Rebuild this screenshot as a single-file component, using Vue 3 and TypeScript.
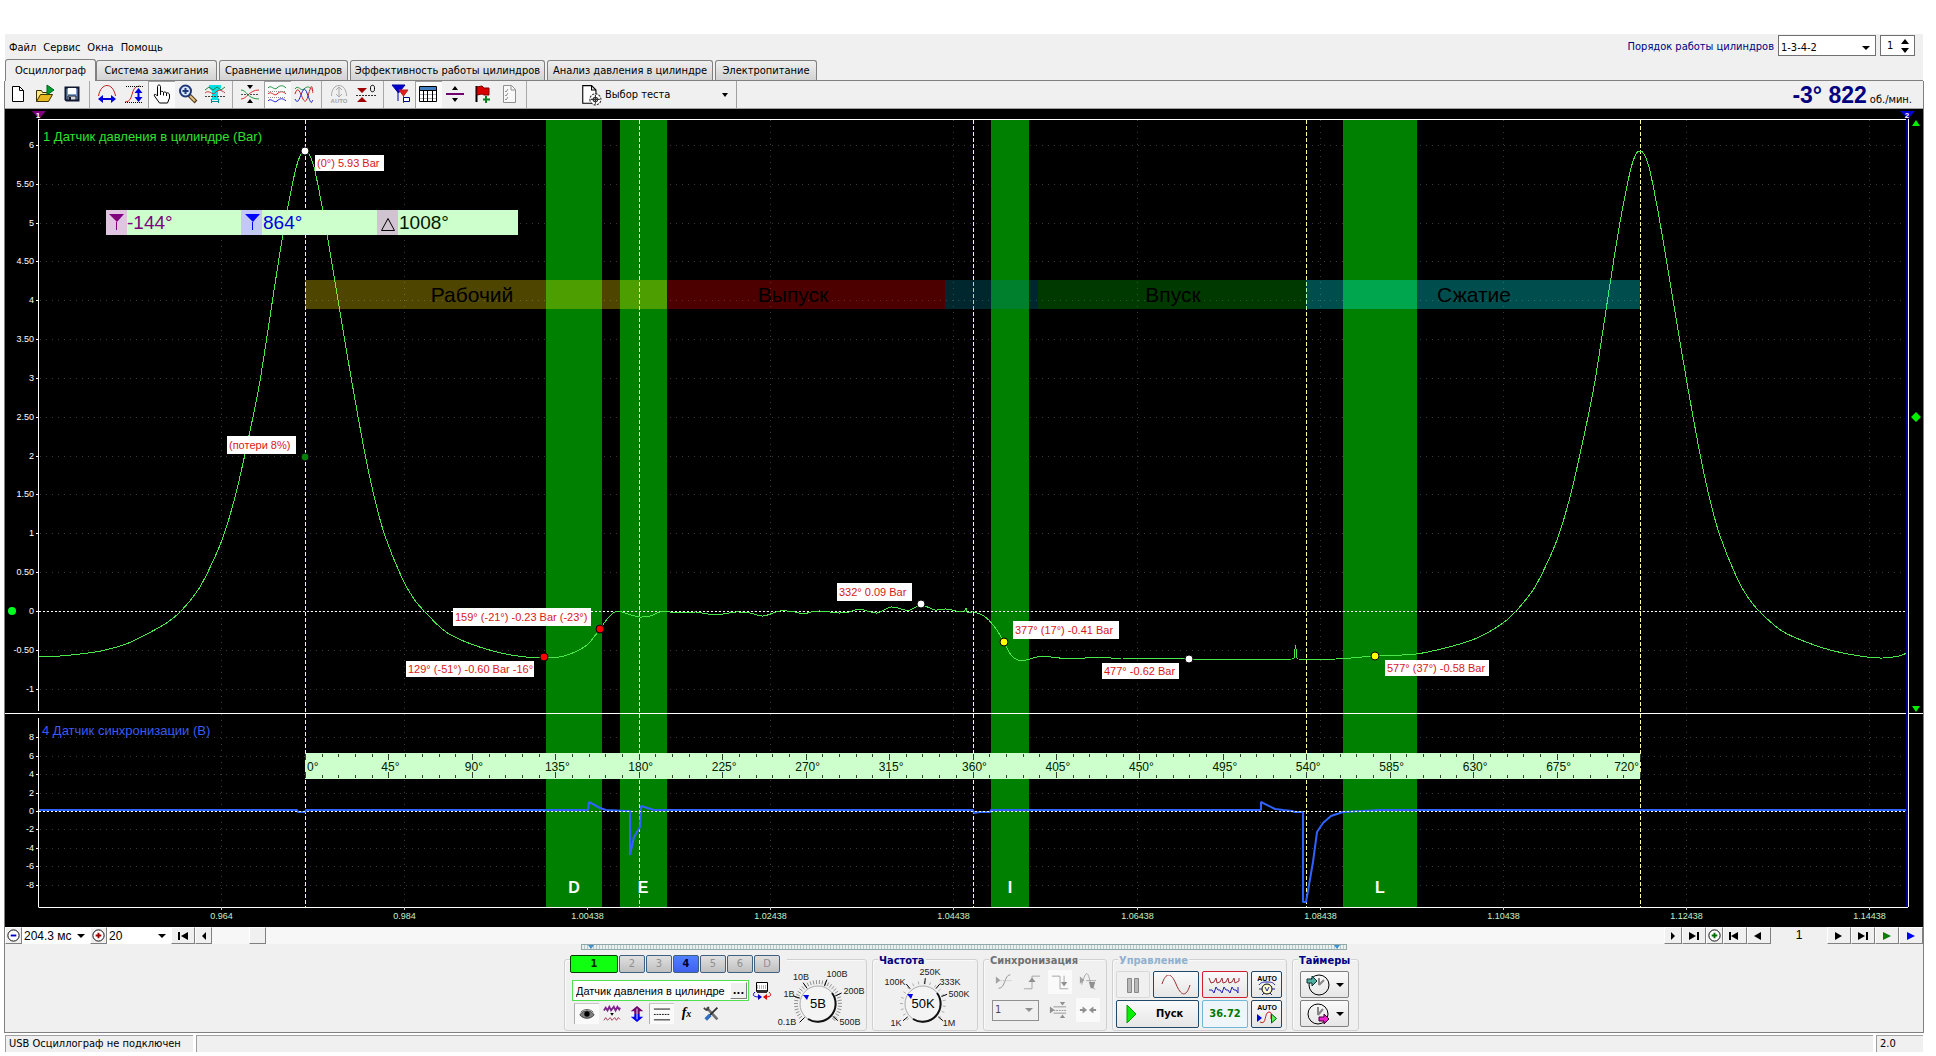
<script setup lang="ts">
import { ref } from 'vue'

type Point = [number, number]
interface Shape { d: string; f?: string; s?: string; w?: number; dash?: string }

const icons: Record<string, Shape[]> = {
  new: [{ d: 'M4.500 2.500h7l4 4v11h-11z', f: '#fff', s: '#000' }, { d: 'M11.500 2.500v4h4', s: '#000' }],
  open: [
    { d: 'M1.500 17.500v-11h5l1 2h6v3', f: '#ffe98a', s: '#3a3000' },
    { d: 'M1.500 17.500l4-7h12l-4 7z', f: '#e8b820', s: '#3a3000' },
    { d: 'M12 1l7 5-7 5z', f: '#00a030', s: '#006020' },
  ],
  save: [
    { d: 'M3.500 3.500h13v13h-12l-1-1z', f: '#7f9fc8', s: '#101830', w: 2 },
    { d: 'M6 4h8v6H6z', f: '#fff' }, { d: 'M6 12h8v4H6z', f: '#d8d8d8', s: '#101830' }, { d: 'M7 13h2v3H7z', f: '#101830' },
  ],
  arc: [{ d: 'M1.500 12C4-2 16-2 18.500 12', s: '#c02020', w: 1 }, { d: 'M1 15l5-4v3h8v-3l5 4-5 4v-3H6v3z', f: '#0000e0' }],
  rise: [
    { d: 'M1 18C11 18 5 2 16 2', s: '#e02020' }, { d: 'M2 2.500h17M1 18.500h17', s: '#000', dash: '1 1' },
    { d: 'M14.500 4l4 5h-3v4h3l-4 5-4-5h3V9h-3z', f: '#0000e0' },
  ],
  hand: [{ d: 'M6.500 12V2.500c0-2 3-2 3 0V8c1-1 2.500-1 3 .5 1-1 2.500-.5 3 .5 1-.5 3 0 3 2v3l-2 5h-8l-5-7c-1-2 1-2.500 3 0zM9.500 8v3M12.500 8.500v3M15.500 9v3', f: '#fff', s: '#000' }],
  zoom: [
    { d: 'M11 11l7 7', s: '#5a4020', w: 4 }, { d: 'M12 12l5 5', s: '#e0c080', w: 2 },
    { d: 'M2 7a5.500 5.500 0 1 0 11 0a5.500 5.500 0 1 0-11 0', f: '#d8e8ff', s: '#203878', w: 2 }, { d: 'M4.500 7h6M7.500 4v6', s: '#203878', w: 2 },
  ],
  cyan: [
    { d: 'M4 1h12v3l-3 3v7l2 2H5l2-2V7L4 4z', f: '#00e0e8' }, { d: 'M0 6l4-3 4 3 4-3 4 3 4-3', s: '#208040' },
    { d: 'M0 9c4-4 8 3 10 0s6-4 10 0', s: '#c04040' }, { d: 'M0 12.500h20', s: '#404040', dash: '2 1' }, { d: 'M6.500 15v4M13.500 15v4M6 17.500h8', s: '#0088a0' },
  ],
  cross: [
    { d: 'M1 6c6 0 6 9 18 9', s: '#20a040' }, { d: 'M1 15c6 0 8-9 18-9', s: '#e03030' }, { d: 'M1 10.500h18', s: '#505050', dash: '2 1' },
    { d: 'M7 1h6l-3 4zM7 19h6l-3-4z', f: '#000' },
  ],
  waves3: [
    { d: 'M1 4c3-4 6 3 9 0s6-3 9 0', s: '#209040', w: 1 }, { d: 'M1 10c3-4 6 3 9 0s6-3 9 0', s: '#e02020', w: 1 }, { d: 'M1 17c3-4 6 3 9 0s6-3 9 0', s: '#2020e0', w: 1 },
    { d: 'M1 7.500h18M1 13.500h18', s: '#909090', dash: '1 1' },
  ],
  waves2: [
    { d: 'M1 5c3-5 6 3 9 0s6-3 9 2', s: '#209040' }, { d: 'M1 10C6-6 9 30 14 12S18 7 19 9', s: '#d02020' }, { d: 'M1 15C6 26 8-5 13 9s4 9 6 7', s: '#2020d0' },
  ],
  auto: [{ d: 'M2.500 12c0-14 15-14 15 0M10 4v9M7 6l3-3 3 3M7 10l3 3 3-3', s: '#a8a8a8' }],
  zero: [{ d: 'M1 4h10l-5 5zM1 18h10l-5-5z', f: '#a00000' }, { d: 'M0 11.500h20', s: '#303030', dash: '2 1' }, { d: 'M14.500 3.500c0-3 4-3 4 0v2c0 3-4 3-4 0z', s: '#000' }],
  filter: [
    { d: 'M1 1h13L7.500 9zM7 7v10', f: '#0000d0', s: '#0000a0' }, { d: 'M8 6h9l-4.500 6zM12.500 11v8', f: '#e02020', s: '#c02020' },
    { d: 'M12.500 13.500h6v4h-6z', f: '#fff', s: '#000080' },
  ],
  table: [
    { d: 'M1.500 2.500h17v15h-17z', f: '#fff', s: '#000' }, { d: 'M2 3h16v3H2z', f: '#4080c0' }, { d: 'M2 10.500h16M2 14.500h16', s: '#b0b0b0' }, { d: 'M1.500 6.500h17M5.500 6v11M9.500 6v11M14.500 6v11', s: '#000' },
  ],
  split: [{ d: 'M1 9h18v2H1z', f: '#700070' }, { d: 'M7 6l3-4 3 4zM7 14l3 4 3-4z', f: '#000' }],
  flag: [{ d: 'M4.500 2v16', s: '#000', w: 2 }, { d: 'M5 3l5-1 2 2h5v7h-5l-2-1-5 1z', f: '#d80000', s: '#800000' }, { d: 'M14 12v7M11 15.500h7', s: '#008020', w: 2 }],
  list: [{ d: 'M4.500 1.500h8l4 4v13h-12z', f: '#f8f8f8', s: '#909090' }, { d: 'M12 2v4h4M6 7l1 1 2-3M6 11l1 1 2-3M6 15l1 1 2-3', s: '#909090' }],
  test: [
    { d: 'M2.500 1.500h8l4 4v12h-12z', f: '#fff', s: '#000' }, { d: 'M10.500 1.500v4h4', s: '#000' },
    { d: 'M9 14a5 5 0 1 0 10 0a5 5 0 1 0-10 0', f: '#fff', s: '#303030', w: 2, dash: '2 1' }, { d: 'M12 14a2 2 0 1 0 4 0a2 2 0 1 0-4 0M14 10v8M10 14h8', s: '#303030' },
  ],
  eye: [{ d: 'M2 11c4-6 12-6 16 0-4 5-12 5-16 0z', f: '#808080', s: '#404040' }, { d: 'M7 10a3 3 0 1 0 6 0a3 3 0 1 0-6 0', f: '#000' }, { d: 'M3 8c4-4 10-4 14 0', s: '#505050' }],
  twowave: [{ d: 'M1 6l2-3 2 3 2-4 2 4 3-4 2 4 2-4 2 3 1-2', s: '#802090', w: 2 }, { d: 'M8 9h4l-2 3z', f: '#000' }, { d: 'M1 17l2-3 2 3 3-3 2 3 3-3 2 3 2-3 2 2', s: '#a03050' }],
  updown: [{ d: 'M10 1l7 6h-4v3H7V7H3z', f: '#700070' }, { d: 'M10 19l7-6h-4v-3H7v3H3z', f: '#0000f0' }, { d: 'M10 4v12', s: '#fff' }],
  lines: [{ d: 'M1 4.500h18M1 16.500h18', s: '#000' }, { d: 'M1 10.500h18', s: '#000', dash: '2 1' }],
  tools: [{ d: 'M4 3l12 13', s: '#707070', w: 3 }, { d: 'M16 3L6 13', s: '#303030', w: 2 }, { d: 'M8 11l-5 5', s: '#3070c0', w: 4 }, { d: 'M1 3c3 4 5 3 5-1', s: '#404040', w: 2 }],
  copy: [
    { d: 'M4.500 1.500h11v9h-11z', f: '#fff', s: '#000' }, { d: 'M5 5h10M5 7h10', s: '#707070', dash: '1 1' }, { d: 'M5 9h10v3H5z', f: '#303030' },
    { d: 'M3 11c-4 4 0 5 5 5', s: '#0000c0' }, { d: 'M6 13l4 3-4 3z', f: '#0000c0' }, { d: 'M17 11c4 4 0 5-4 5', s: '#e00000' }, { d: 'M15 13l-4 3 4 3z', f: '#e00000' },
  ],
  s1: [{ d: 'M1 4l5 4-5 4z', f: '#a0a0a0' }, { d: 'M4 17c8 0 6-15 13-15', s: '#909090' }, { d: 'M1 8.500h18', s: '#b0b0b0', dash: '1 1' }],
  s2: [{ d: 'M1 17.500h9v-14h9', s: '#a0a0a0' }, { d: 'M6 10l4-5 4 5z', f: '#909090' }],
  s3: [{ d: 'M1 3.500h9v14h9', s: '#a0a0a0' }, { d: 'M14.500 3v10', s: '#a0a0a0' }, { d: 'M11 10h7l-3.500 5z', f: '#909090' }],
  s4: [{ d: 'M1 4l5 4-5 4z', f: '#a0a0a0' }, { d: 'M3 13C8-5 10 0 12 8s2 8 6 10M8 8.500h11', s: '#a0a0a0' }, { d: 'M11 10h7l-2 7h-3z', f: '#909090' }],
  s5: [{ d: 'M1 6l5 4-5 4zM12 1h6l-3 4zM12 19h6l-3-4z', f: '#909090' }, { d: 'M5 6.500h14M5 13.500h14', s: '#909090' }, { d: 'M5 10.500h14', s: '#909090', dash: '2 1' }],
  s6: [{ d: 'M1 9h3V6l5 4-5 4v-3H1zM19 9h-3V6l-5 4 5 4v-3h3z', f: '#909090' }],
}

const toolGroups = [
  [{ i: 'new', t: 'Новый' }, { i: 'open', t: 'Открыть' }, { i: 'save', t: 'Сохранить' }],
  [{ i: 'arc', t: 'Масштаб X' }, { i: 'rise', t: 'Масштаб Y' }, { i: 'hand', t: 'Рука', on: true }, { i: 'zoom', t: 'Лупа' }, { i: 'cyan', t: 'Обзор' }],
  [{ i: 'cross', t: 'Совместить' }, { i: 'waves3', t: 'Раздельно', on: true }, { i: 'waves2', t: 'Вместе' }],
  [{ i: 'auto', t: 'Авто' }, { i: 'zero', t: 'Ноль' }],
  [{ i: 'filter', t: 'Маркеры' }, { i: 'table', t: 'Таблица', on: true }, { i: 'split', t: 'Разделить' }, { i: 'flag', t: 'Метка' }, { i: 'list', t: 'Отчёт' }],
]

const menu = ['Файл', 'Сервис', 'Окна', 'Помощь']
const tabs = [
  { name: 'Осциллограф', w: 91 }, { name: 'Система зажигания', w: 121 }, { name: 'Сравнение цилиндров', w: 129 },
  { name: 'Эффективность работы цилиндров', w: 195 }, { name: 'Анализ давления в цилиндре', w: 166 }, { name: 'Электропитание', w: 102 },
]
const activeTab = ref(0)
const order = ref('1-3-4-2')
const cylinder = ref(1)
const span = ref('204.3 мс')
const perDiv = ref('20')
const channelName = ref('Датчик давления в цилиндре')
const channels = ['1', '2', '3', '4', '5', '6', 'D']

/* chart geometry */
const DEG = 1335 / 720
const degX = (d: number) => 305 + d * DEG
const barY = (v: number) => 611 - v * 77.7
const syncY = (v: number) => 811 - v * 9.2
const pressureTicks = Array.from({ length: 15 }, (_, i) => 6 - i * 0.5)
const syncTicks = [8, 6, 4, 2, 0, -2, -4, -6, -8]
const fmt = (v: number) => (Number.isInteger(v) ? String(v) : v.toFixed(2))
const timeTicks = ['0.964', '0.984', '1.00438', '1.02438', '1.04438', '1.06438', '1.08438', '1.10438', '1.12438', '1.14438']
const timeX = (i: number) => Math.round(221 + i * 183.1) + 0.5
const bands = [{ n: 'D', x: 546, w: 56, t: 574 }, { n: 'E', x: 620, w: 47, t: 643 }, { n: 'I', x: 991, w: 38, t: 1010 }, { n: 'L', x: 1343, w: 74, t: 1380 }]
const phases = [
  { x: 305, w: 362, c: 'rgba(255,230,0,.3)' }, { x: 667, w: 278, c: 'rgba(255,0,0,.3)' },
  { x: 945, w: 93, c: 'rgba(0,130,150,.3)' }, { x: 1038, w: 268, c: 'rgba(0,190,0,.3)' }, { x: 1306, w: 334, c: 'rgba(0,255,255,.3)' },
]
const phaseNames = [{ n: 'Рабочий', x: 472 }, { n: 'Выпуск', x: 793 }, { n: 'Впуск', x: 1173 }, { n: 'Сжатие', x: 1474 }]
const ruler = Array.from({ length: 81 }, (_, i) => i * 9)
const rulerLabels = Array.from({ length: 17 }, (_, i) => i * 45)

const rise: Point[] = [[182, 610], [198, 590], [208, 571.7], [222, 540], [234.5, 499], [245, 454], [258, 392], [266, 343], [273, 297], [281, 246], [288, 206], [296, 168], [301, 154], [305, 151], [309, 154], [314, 167], [322, 206], [329, 246], [337.5, 297], [346, 348], [357, 411], [366, 459], [375, 500], [385, 536], [402, 578], [414, 599]]
const pressure: Point[] = [
  [39, 657], [60, 656], [80, 654], [101, 651], [126, 644], [147, 634], [168, 622], ...rise,
  [426, 613], [446, 632], [471, 644], [501, 653], [526, 657], [547, 658], [564, 656], [581, 649], [589, 643], [600, 629], [608, 618],
  [615, 612], [622, 612], [631, 615], [640, 617], [650, 616], [660, 612], [670, 612], [683, 613], [696, 612], [708, 614], [723, 614], [736, 612],
  [750, 613], [763, 616], [780, 611], [795, 612], [803, 614], [811, 612], [820, 611], [839, 613], [849, 612], [859, 609], [877, 613], [891, 607],
  [905, 610], [910, 610], [921, 605], [935, 610], [946, 609], [964, 612], [966, 608], [967, 612], [974, 612], [984, 616], [994, 626], [1004, 642],
  [1011, 655], [1018, 660], [1026, 660], [1037, 657], [1051, 657], [1070, 659], [1100, 657], [1121, 659], [1150, 658], [1188, 659], [1240, 659],
  [1292, 659], [1294, 658], [1295.5, 645], [1297, 658], [1298, 659], [1336, 659], [1375, 656], [1416, 654], [1449, 647], [1477, 638], [1503, 623],
  ...rise.map(([x, y]): Point => [x + 1335, y]),
  [1761, 613], [1782, 631], [1806, 642], [1834, 651], [1867, 657], [1883, 658], [1899, 656], [1907, 653],
]
const sync: Point[] = [
  [39, 810], [297, 810], [298, 812], [305, 812], [306, 810], [588, 810], [589, 802], [600, 808], [606, 810], [627, 811], [630, 811], [630, 855], [634, 837], [640, 827],
  [641, 806], [654, 810], [666, 810], [973, 810], [974, 813], [980, 812], [990, 812], [991, 810], [1261, 810], [1261, 802], [1275, 809], [1283, 810], [1292, 811],
  [1295, 812], [1303, 812], [1303, 902], [1306, 902], [1309, 885], [1313, 862], [1317, 832], [1323, 823], [1331, 816], [1343, 812], [1362, 811], [1380, 810], [1907, 810],
]
const line = (p: Point[]) => p.map(([x, y], i) => `${i ? 'L' : 'M'}${x} ${y}`).join('')
/* smooth curve: tangents follow the neighbouring samples, handles scale with segment length; narrow spikes stay straight */
const spline = (p: Point[]) => {
  const tangent = (i: number): Point => {
    const a = p[Math.max(i - 1, 0)], c = p[Math.min(i + 1, p.length - 1)]
    const len = Math.hypot(c[0] - a[0], c[1] - a[1])
    return [(c[0] - a[0]) / len, (c[1] - a[1]) / len]
  }
  let d = `M${p[0][0]} ${p[0][1]}`
  for (let i = 0; i < p.length - 1; i++) {
    const b = p[i], c = p[i + 1], t = tangent(i), u = tangent(i + 1)
    if (c[0] - b[0] < 3) {
      d += `L${c[0]} ${c[1]}`
      continue
    }
    const k = Math.hypot(c[0] - b[0], c[1] - b[1]) / 3
    d += `C${(b[0] + k * t[0]).toFixed(2)} ${(b[1] + k * t[1]).toFixed(2)} ${(c[0] - k * u[0]).toFixed(2)} ${(c[1] - k * u[1]).toFixed(2)} ${c[0]} ${c[1]}`
  }
  return d
}
const notes = [
  { t: '(0°) 5.93 Bar', x: 315, y: 155, w: 69, h: 16 }, { t: '(потери 8%)', x: 227, y: 436, w: 69, h: 18 },
  { t: '159° (-21°) -0.23 Bar (-23°)', x: 453, y: 608, w: 138, h: 18 }, { t: '129° (-51°) -0.60 Bar -16°', x: 406, y: 661, w: 128, h: 16 },
  { t: '332° 0.09 Bar', x: 837, y: 583, w: 75, h: 18 }, { t: '377° (17°) -0.41 Bar', x: 1013, y: 621, w: 106, h: 18 },
  { t: '477° -0.62 Bar', x: 1102, y: 663, w: 77, h: 16 }, { t: '577° (37°) -0.58 Bar', x: 1385, y: 660, w: 104, h: 16 },
]
const dots = [
  { x: 305, y: 151, c: '#fff' }, { x: 305, y: 457, c: '#008000' }, { x: 544, y: 657, c: '#f00' }, { x: 600, y: 629, c: '#f00' },
  { x: 921, y: 604, c: '#fff' }, { x: 1004, y: 642, c: '#ff0' }, { x: 1189, y: 659, c: '#fff' }, { x: 1375, y: 656, c: '#ff0' },
]

interface Dial { value: string; px: number; py: number; cx: number; labels: { t: string; x: number; y: number }[]; marks: number[] }
const voltDial: Dial = {
  value: '5В', px: 21, py: 31, cx: 33,
  labels: [{ t: '10В', x: 16, y: 14 }, { t: '100В', x: 52, y: 11 }, { t: '200В', x: 69, y: 28 }, { t: '500В', x: 65, y: 59 }, { t: '0.1В', x: 2, y: 59 }, { t: '1В', x: 4, y: 31 }],
  marks: [-135, -72, -35, 20, 65, 130],
}
const freqDial: Dial = {
  value: '50K', px: 28, py: 30, cx: 41,
  labels: [{ t: '250K', x: 48, y: 9 }, { t: '333K', x: 68, y: 19 }, { t: '500K', x: 77, y: 31 }, { t: '1M', x: 67, y: 60 }, { t: '1K', x: 14, y: 60 }, { t: '100K', x: 13, y: 19 }],
  marks: [-130, -40, 5, 40, 68, 130],
}
const minorMarks = Array.from({ length: 36 }, (_, i) => -135 + i * 7.7)
const spoke = (cx: number, deg: number, r1: number, r2: number) => {
  const a = (deg * Math.PI) / 180
  return `M${(cx + r1 * Math.sin(a)).toFixed(1)} ${(38 - r1 * Math.cos(a)).toFixed(1)}L${(cx + r2 * Math.sin(a)).toFixed(1)} ${(38 - r2 * Math.cos(a)).toFixed(1)}`
}
const navLeft = [{ d: 'M3 1h2v8H3zM13 1v8L6 5z', w: 24 }, { d: 'M10 1v8L6 5z', w: 17 }]
</script>

<template>
  <div class="app">
    <header class="top">
      <nav class="menu"><button v-for="m in menu" :key="m" type="button">{{ m }}</button></nav>
      <div class="order">
        <label for="order">Порядок работы цилиндров</label>
        <span class="combo boxed order-box">
          <select id="order" v-model="order"><option>1-3-4-2</option><option>1-2-4-3</option></select>
          <svg class="arrow" viewBox="0 0 8 4"><path d="M0 0h8L4 4z" /></svg>
        </span>
        <span class="spin">
          <input v-model="cylinder" type="number" aria-label="Номер цилиндра">
          <svg viewBox="0 0 8 14"><path d="M0 5h8L4 0zM0 9h8l-4 5z" /></svg>
        </span>
      </div>
    </header>

    <div class="tabs" role="tablist">
      <button v-for="(t, i) in tabs" :key="t.name" type="button" role="tab" :aria-selected="i === activeTab" :class="{ active: i === activeTab }" :style="{ width: t.w + 'px' }" @click="activeTab = i">{{ t.name }}</button>
    </div>

    <main class="page">
      <div class="toolbar">
        <div v-for="(g, gi) in toolGroups" :key="gi" class="tool-group">
          <button v-for="b in g" :key="b.i" type="button" :title="b.t" :class="{ on: 'on' in b }">
            <svg viewBox="0 0 20 20">
              <path v-for="(p, pi) in icons[b.i]" :key="pi" :d="p.d" :fill="p.f ?? 'none'" :stroke="p.s" :stroke-width="p.w ?? 1" :stroke-dasharray="p.dash" />
              <text v-if="b.i === 'auto'" x="10" y="19" class="auto-text">AUTO</text>
            </svg>
          </button>
        </div>
        <button type="button" class="test">
          <svg viewBox="0 0 20 20"><path v-for="(p, pi) in icons.test" :key="pi" :d="p.d" :fill="p.f ?? 'none'" :stroke="p.s" :stroke-dasharray="p.dash" /></svg>
          <span>Выбор теста</span>
          <svg class="arrow" viewBox="0 0 8 4"><path d="M1 0h6L4 4z" /></svg>
        </button>
        <div class="rpm"><b>-3° 822</b><span>об./мин.</span></div>
      </div>

      <svg class="chart" viewBox="5 109 1918 818">
        <rect x="5" y="109" width="1918" height="818" fill="#000" />
        <g class="grid">
          <path v-for="v in pressureTicks" :key="'p' + v" :d="`M40 ${Math.round(barY(v)) + 0.5}H1906`" />
          <path v-for="v in syncTicks" :key="'s' + v" :d="`M40 ${Math.round(syncY(v)) + 0.5}H1906`" />
          <path v-for="(t, i) in timeTicks" :key="t" :d="`M${timeX(i)} 120V906`" />
        </g>
        <g v-for="b in bands" :key="b.n">
          <rect :x="b.x" y="120" :width="b.w" height="787" fill="#008000" />
          <text :x="b.t" y="893" class="band-name">{{ b.n }}</text>
        </g>
        <path class="cursor" d="M305.500 120V907M639.500 120V907M973.500 120V907M1306.500 120V907M1640.500 120V907" />
        <path class="zero" d="M39 611.500H1907" />
        <path :d="spline(pressure)" class="curve" />
        <path :d="line(sync)" class="pulse" />
        <path class="zero" d="M39 811.500H1907" />
        <rect v-for="p in phases" :key="p.x" :x="p.x" y="280" :width="p.w" height="29" :fill="p.c" />
        <text v-for="p in phaseNames" :key="p.n" :x="p.x" y="302" class="phase">{{ p.n }}</text>
        <path d="M39 119.500H1908" stroke="#fff" /><path d="M5 713.500H1923M38.500 907.500H1908" stroke="#fff" />
        <path d="M38.500 119V711M38.500 718V907" stroke="#fff" /><path d="M1908.500 119V907" stroke="#fff" /><path d="M1907 119V907" stroke="#000090" stroke-width="2" />

        <g class="scale">
          <g v-for="v in pressureTicks" :key="'a' + v"><text x="34" :y="barY(v) + 3">{{ fmt(v) }}</text><path :d="`M36 ${Math.round(barY(v)) + 0.5}h3`" stroke="#fff" /></g>
          <g v-for="v in syncTicks" :key="'b' + v"><text x="34" :y="syncY(v) + 3">{{ v }}</text><path :d="`M36 ${Math.round(syncY(v)) + 0.5}h3`" stroke="#fff" /></g>
        </g>
        <g class="time"><g v-for="(t, i) in timeTicks" :key="t"><path :d="`M${timeX(i)} 907v3`" stroke="#ccc" /><text :x="timeX(i)" y="919">{{ t }}</text></g></g>
        <text x="43" y="141" class="title" fill="#30e030">1 Датчик давления в цилиндре (Bar)</text>
        <text x="42" y="735" class="title" fill="#3a5cf0">4 Датчик синхронизации (В)</text>

        <path d="M32 111h14l-7 8z" fill="#800080" /><path d="M1900 111h15l-7 8z" fill="#0000d0" />
        <text x="38" y="118" class="mark">1</text><text x="1907" y="118" class="mark">2</text>
        <path d="M1912 126l4-6 4 6zM1912 706h8l-4 6zM1916 412l5 5-5 5-5-5z" fill="#00f000" />
        <circle cx="12" cy="611" r="4" fill="#00ff20" />

        <rect x="305" y="753" width="1335" height="26" fill="#ccffcc" />
        <path v-for="d in ruler" :key="d" :d="`M${Math.round(degX(d)) + 0.5} 754v${d % 45 ? 3 : 6}m0 ${d % 45 ? 18 : 12}v${d % 45 ? 3 : 6}`" stroke="#304030" />
        <text v-for="d in rulerLabels" :key="d" :x="d === 0 ? 307 : d === 720 ? 1639 : degX(d) + 2" y="771" class="ruler-text" :text-anchor="d === 0 ? 'start' : d === 720 ? 'end' : 'middle'">{{ d }}°</text>

        <rect x="106" y="210" width="412" height="25" fill="#ccffcc" />
        <rect x="106" y="210" width="21" height="25" fill="#e0c4e0" /><rect x="241" y="210" width="21" height="25" fill="#c4c8f4" /><rect x="377" y="210" width="21" height="25" fill="#cfc4cf" />
        <path d="M109 214h15l-7 8zM116 222h1v8h-1z" fill="#800080" /><path d="M245 214h15l-7 8zM252 222h1v8h-1z" fill="#0000ff" />
        <path d="M381.500 230.500h13l-6.500-12z" fill="none" stroke="#000" />
        <g class="readout"><text x="127" y="229" fill="#800080">-144°</text><text x="263" y="229" fill="#0000e0">864°</text><text x="399" y="229" fill="#001800">1008°</text></g>

        <circle v-for="p in dots" :key="p.x + '-' + p.y" :cx="p.x" :cy="p.y" r="4" :fill="p.c" stroke="#000" stroke-width="1" />
        <g v-for="n in notes" :key="n.t"><rect :x="n.x" :y="n.y" :width="n.w" :height="n.h" fill="#fff" /><text :x="n.x + 2" :y="n.y + n.h / 2 + 4" class="note">{{ n.t }}</text></g>
      </svg>

      <div class="scroll">
        <button type="button" aria-label="Уменьшить" class="w17"><svg viewBox="0 0 16 16" class="round"><circle cx="8" cy="8" r="6" /><path d="M5 8h6" stroke="#0000c0" stroke-width="2" /></svg></button>
        <span class="combo span-box"><select v-model="span" aria-label="Развёртка"><option>204.3 мс</option></select><svg class="arrow" viewBox="0 0 8 4"><path d="M0 0h8L4 4z" /></svg></span>
        <button type="button" aria-label="Увеличить" class="w17"><svg viewBox="0 0 16 16" class="round"><circle cx="8" cy="8" r="6" /><path d="M5 8h6M8 5v6" stroke="#a00000" stroke-width="2" /></svg></button>
        <span class="combo div-box"><select v-model="perDiv" aria-label="Деление"><option>20</option></select><svg class="arrow" viewBox="0 0 8 4"><path d="M0 0h8L4 4z" /></svg></span>
        <button v-for="n in navLeft" :key="n.d" type="button" aria-label="Назад" :style="{ width: n.w + 'px' }"><svg viewBox="0 0 16 10"><path :d="n.d" /></svg></button>
        <div class="track"><span class="thumb"></span></div>
        <button type="button" aria-label="Вперёд" class="w18"><svg viewBox="0 0 16 10"><path d="M6 1v8l4-4z" /></svg></button>
        <button type="button" aria-label="В конец" class="w24"><svg viewBox="0 0 16 10"><path d="M3 1v8l7-4zM11 1h2v8h-2z" /></svg></button>
        <button type="button" aria-label="Добавить" class="w17"><svg viewBox="0 0 16 16" class="round"><circle cx="8" cy="8" r="6" /><path d="M5 8h6M8 5v6" stroke="#007000" stroke-width="2" /></svg></button>
        <button type="button" aria-label="Первый" class="w24"><svg viewBox="0 0 16 10"><path d="M2 1h2v8H2zM11 1v8L4 5z" /></svg></button>
        <button type="button" aria-label="Предыдущий" class="w24"><svg viewBox="0 0 16 10"><path d="M10 1v8L3 5z" /></svg></button>
        <span class="frame-no">1</span>
        <button type="button" aria-label="Следующий" class="w24"><svg viewBox="0 0 16 10"><path d="M4 1v8l7-4z" /></svg></button>
        <button type="button" aria-label="Последний" class="w24"><svg viewBox="0 0 16 10"><path d="M3 1v8l7-4zM11 1h2v8h-2z" /></svg></button>
        <button type="button" aria-label="Воспроизвести" class="w24"><svg viewBox="0 0 16 10"><path d="M4 1v8l8-4z" fill="#008000" /></svg></button>
        <button type="button" aria-label="Воспроизвести всё" class="w24"><svg viewBox="0 0 16 10"><path d="M4 1v8l8-4z" fill="#0000f0" /></svg></button>
      </div>

      <div class="splitter"><i></i><i></i></div>
      <section class="panel">
        <div class="group channel">
          <div class="channel-left">
            <div class="channels"><button v-for="c in channels" :key="c" type="button" :class="{ green: c === '1', blue: c === '4' }">{{ c }}</button></div>
            <div class="name-row">
              <span class="name-box"><input v-model="channelName" aria-label="Имя канала"><button type="button">...</button></span>
              <svg viewBox="0 0 20 20"><path v-for="(p, pi) in icons.copy" :key="pi" :d="p.d" :fill="p.f ?? 'none'" :stroke="p.s" :stroke-dasharray="p.dash" /></svg>
            </div>
            <div class="modes">
              <button v-for="n in ['eye', 'twowave', 'updown', 'lines', 'fx', 'tools']" :key="n" type="button" :aria-label="n" :class="{ on: n === 'eye' || n === 'lines' }">
                <i v-if="n === 'fx'" class="fx">f<small>x</small></i>
                <svg v-else viewBox="0 0 20 20"><path v-for="(p, pi) in icons[n]" :key="pi" :d="p.d" :fill="p.f ?? 'none'" :stroke="p.s" :stroke-width="p.w ?? 1" :stroke-dasharray="p.dash" /></svg>
              </button>
            </div>
          </div>
          <svg v-for="k in [voltDial]" :key="k.value" class="dial volt" viewBox="-12 0 98 64">
            <path v-for="m in minorMarks" :key="m" :d="spoke(k.cx, m, 20, 24)" stroke="#909090" /><path v-for="m in k.marks" :key="m" :d="spoke(k.cx, m, 19, 26)" stroke="#000" />
            <circle :cx="k.cx" cy="38" r="18" fill="#f4f4f4" stroke="#aaa" /><path :d="`M${k.cx + 14} 27A18 18 0 0 1 ${k.cx - 10} 53`" fill="none" stroke="#111" stroke-width="2" />
            <path :d="`M${k.px - 3} ${k.py - 2}h6l-2 5z`" fill="#0000f0" /><text :x="k.cx" y="42" class="dial-value">{{ k.value }}</text>
            <text v-for="l in k.labels" :key="l.t" :x="l.x" :y="l.y" class="dial-label">{{ l.t }}</text>
          </svg>
        </div>

        <div class="group freq">
          <h3>Частота</h3>
          <svg v-for="k in [freqDial]" :key="k.value" class="dial" viewBox="0 0 100 64">
            <path v-for="m in minorMarks.filter((_, i) => i % 2 === 0)" :key="m" :d="spoke(k.cx, m, 20, 23)" stroke="#b0b0b0" /><path v-for="m in k.marks" :key="m" :d="spoke(k.cx, m, 20, 26)" stroke="#000" />
            <circle :cx="k.cx" cy="38" r="18" fill="#f4f4f4" stroke="#aaa" /><path :d="`M${k.cx + 14} 27A18 18 0 0 1 ${k.cx - 10} 53`" fill="none" stroke="#111" stroke-width="2" />
            <path :d="`M${k.px - 3} ${k.py - 2}h6l-2 5z`" fill="#0000f0" /><text :x="k.cx" y="42" class="dial-value">{{ k.value }}</text>
            <text v-for="l in k.labels" :key="l.t" :x="l.x" :y="l.y" class="dial-label">{{ l.t }}</text>
          </svg>
        </div>

        <div class="group sync">
          <h3>Синхронизация</h3>
          <div class="sync-row">
            <button v-for="n in ['s1', 's2', 's3', 's4']" :key="n" type="button" disabled :aria-label="n" :class="{ on: n === 's3' }"><svg viewBox="0 0 20 20"><path v-for="(p, pi) in icons[n]" :key="pi" :d="p.d" :fill="p.f ?? 'none'" :stroke="p.s" :stroke-dasharray="p.dash" /></svg></button>
          </div>
          <div class="sync-row">
            <span class="combo sync-box"><select disabled aria-label="Канал синхронизации"><option>1</option></select><svg class="arrow" viewBox="0 0 8 4"><path d="M0 0h8L4 4z" fill="#909090" /></svg></span>
            <button v-for="n in ['s5', 's6']" :key="n" type="button" disabled :aria-label="n" :class="{ on: n === 's6' }"><svg viewBox="0 0 20 20"><path v-for="(p, pi) in icons[n]" :key="pi" :d="p.d" :fill="p.f ?? 'none'" :stroke="p.s" :stroke-dasharray="p.dash" /></svg></button>
          </div>
        </div>

        <div class="group control">
          <h3>Управление</h3>
          <div class="control-grid">
            <button type="button" class="flat" aria-label="Пауза"><svg viewBox="0 0 20 20"><path d="M4.500 3.500h4v14h-4zM11.500 3.500h4v14h-4z" fill="#b8b8b8" stroke="#888" /></svg></button>
            <button type="button" aria-label="Синус"><svg class="wide" viewBox="0 0 30 20"><path d="M1 9C5-3 10-3 15 9s10 14 14 1" fill="none" stroke="#a03030" /></svg></button>
            <button type="button" class="red" aria-label="Запись"><svg class="wider" viewBox="0 0 34 20"><path d="M1 3l2 5 3-1 2-4 1 5 3-1 2-4 1 5 3-1 2-4 1 5 3-1 2-4 1 5 4-2V3" fill="none" stroke="#a03030" /><path d="M1 15h3l2 3 2-6 2 3h2l2 3 2-6 2 3h2l2 3 2-6 2 3h2l2 3v-6" fill="none" stroke="#2020b0" /></svg></button>
            <button type="button" aria-label="Авто масштаб"><svg class="tall" viewBox="0 0 24 24"><text x="12" y="8" class="auto-mini">AUTO</text><circle cx="12" cy="16" r="5" fill="#ffffd0" stroke="#000" /><path d="M10 14l2 4 2-4" fill="none" stroke="#2020a0" /><path d="M4 12c2-3 5-3 8-3s6 0 8 3M7 22l2-2M17 22l-2-2M4 16h3M17 16h3" fill="none" stroke="#2020a0" /></svg></button>
            <button type="button" class="start"><svg viewBox="0 0 20 20"><path d="M6 1v18L15 10z" fill="#00f000" stroke="#00a000" /></svg><span>Пуск</span></button>
            <button type="button" class="value">36.72</button>
            <button type="button" aria-label="Авто пуск"><svg class="tall" viewBox="0 0 24 24"><text x="12" y="8" class="auto-mini">AUTO</text><path d="M2 12l5 4-5 4z" fill="#0000e0" /><path d="M5 20c7 4 4-10 9-10s-1 8 4 8" fill="none" stroke="#c02020" /><path d="M16.500 12v9l5-4.500z" fill="#60f060" stroke="#006000" /></svg></button>
          </div>
        </div>

        <div class="group timers">
          <h3>Таймеры</h3>
          <button type="button" aria-label="Таймер включения"><svg class="clock" viewBox="0 0 24 24"><circle cx="13" cy="12" r="10" fill="none" stroke="#000" /><path d="M13 12V5M13 12l5-5" stroke="#888" stroke-width="2" /><path d="M1 6h5V3l5 5-5 5v-3H1z" fill="#50b0a0" stroke="#103030" /></svg><svg class="arrow" viewBox="0 0 8 4"><path d="M0 0h8L4 4z" /></svg></button>
          <button type="button" aria-label="Таймер выключения"><svg class="clock" viewBox="0 0 24 24"><circle cx="12" cy="12" r="10" fill="none" stroke="#000" /><path d="M12 13V5M12 13l5-6" stroke="#888" stroke-width="2" /><path d="M13 15h5v-3l5 5-5 5v-3h-5z" fill="#f020d0" stroke="#400030" /></svg><svg class="arrow" viewBox="0 0 8 4"><path d="M0 0h8L4 4z" /></svg></button>
        </div>
      </section>
    </main>

    <footer class="status"><span class="s-left">USB Осциллограф не подключен</span><span class="s-mid"></span><span class="s-right">2.0</span></footer>
  </div>
</template>

<style>
body { margin: 0; background: #fff; }
</style>

<style scoped>
* { box-sizing: border-box; }
.app { margin: 34px 13px 0 5px; background: #f0f0f0; font: 11px/16px "DejaVu Sans Condensed", "Liberation Sans", sans-serif; color: #000; }
button, select, input { font: inherit; color: inherit; margin: 0; padding: 0; border: 0; border-radius: 0; background: none; }
svg { display: block; flex: none; }
.top { display: flex; justify-content: space-between; height: 25px; }
.menu { display: flex; gap: 7px; padding: 3px 0 0 4px; align-items: center; }
.order { display: flex; gap: 4px; padding: 1px 8px 0 0; color: #000080; align-items: flex-start; line-height: 24px; }
.combo { display: grid; align-items: center; background: #fff; color: #000; }
.combo > * { grid-area: 1 / 1; }
.combo select { appearance: none; width: 100%; height: 100%; padding-left: 2px; }
.arrow { width: 8px; height: 4px; pointer-events: none; }
.combo .arrow { justify-self: end; margin-right: 5px; }
.boxed { border: 1px solid #707070; }
.order-box { width: 98px; height: 21px; }
.spin { display: flex; align-items: center; width: 35px; height: 21px; border: 1px solid #707070; background: #fff; color: #000; padding: 0 6px; }
.spin input { width: 14px; appearance: textfield; outline: 0; }
.spin input::-webkit-inner-spin-button { appearance: none; display: none; }
.spin svg { width: 8px; height: 14px; }

.tabs { display: flex; align-items: flex-end; gap: 2px; height: 22px; border-bottom: 1px solid #808080; }
.tabs button { height: 20px; white-space: nowrap; border: 1px solid #808080; border-bottom: 0; border-radius: 3px 3px 0 0; background: linear-gradient(#f0f0f0, #d2d2d2); }
.tabs .active { height: 22px; margin: 0 -2px -1px 0; background: #f0f0f0; }

.page { border-right: 1px solid #808080; border-bottom: 1px solid #808080; border-left: 1px solid #808080; margin-right: -1px; margin-left: -1px; }
.toolbar { display: flex; align-items: center; height: 28px; border-bottom: 1px solid #a0a0a0; }
.tool-group { display: flex; height: 27px; padding-right: 3px; margin-right: 4px; border-right: 1px solid #a8a8a8; }
.tool-group button { width: 27px; height: 27px; display: grid; place-items: center start; padding: 0 0 2px 3px; }
.tool-group button.on { background: #fafafa; border-left: 1px solid #a0a0a0; border-top: 1px solid #a0a0a0; padding-left: 2px; }
.tool-group svg { width: 20px; height: 20px; }
.auto-text { font: bold 6px "Liberation Sans", sans-serif; fill: #a0a0a0; text-anchor: middle; }
.test { display: flex; align-items: center; gap: 3px; width: 160px; height: 27px; margin-left: 46px; padding: 0 7px 0 3px; border-right: 1px solid #a0a0a0; }
.test svg:first-child { width: 22px; height: 22px; }
.test .arrow { margin-left: auto; }
.rpm { margin-left: auto; margin-right: 11px; display: flex; align-items: baseline; gap: 3px; }
.rpm b { font: bold 23px/26px "Liberation Sans", sans-serif; color: #000080; }

.chart { width: 100%; height: auto; font-family: "Liberation Sans", sans-serif; }
.grid path { stroke: #3a3a3a; stroke-dasharray: 1 5; }
.cursor { stroke: #ffff9a; stroke-dasharray: 4 2; }
.zero { stroke: #fff; stroke-dasharray: 2 2; }
.curve { fill: none; stroke: #48e848; shape-rendering: crispEdges; }
.pulse { fill: none; stroke: #2f63ff; stroke-width: 2; stroke-linejoin: bevel; }
.band-name { font: bold 16px "Liberation Sans", sans-serif; fill: #fff; text-anchor: middle; }
.phase { font-size: 21px; text-anchor: middle; fill: #000; }
.scale text { font-size: 9px; fill: #fff; text-anchor: end; }
.time text { font-size: 9px; fill: #c8f0c8; text-anchor: middle; }
.title { font-size: 13px; }
.mark { font: bold 8px "Liberation Sans", sans-serif; fill: #fff; text-anchor: middle; }
.ruler-text { font-size: 12px; fill: #002000; }
.readout text { font-size: 19px; }
.note { font-size: 11px; fill: #d81818; }

.scroll { display: flex; height: 17px; background: #f7f7f7; }
.scroll button { display: grid; place-items: center; background: #f0f0f0; border: 1px solid; border-color: #fff #808080 #808080 #fff; }
.scroll button svg { width: 16px; height: 10px; }
.scroll button svg.round { width: 15px; height: 15px; }
.round circle { fill: #fff; stroke: #000; }
.w17 { width: 17px; }
.w18 { width: 18px; }
.w24 { width: 24px; }
.span-box { width: 68px; }
.div-box { width: 64px; }
.scroll .combo select { font-family: "Liberation Sans", sans-serif; font-size: 12px; }
.track { flex: 1; padding-left: 37px; }
.thumb { display: block; width: 17px; height: 17px; background: #f0f0f0; border: 1px solid; border-color: #fff #808080 #808080 #fff; }
.frame-no { width: 56px; text-align: center; background: #f0f0f0; font-family: "Liberation Sans", sans-serif; font-size: 12px; }

.splitter { display: flex; justify-content: space-between; width: 766px; height: 6px; margin: 0 auto; padding: 0 6px; border: 1px solid #90a8a8; background: repeating-linear-gradient(90deg, #e8f0f0 0 2px, #b8c8c8 2px 3px); }
.splitter i { border: 3px solid transparent; border-top: 4px solid #4090d0; border-bottom: 0; height: 0; }
.panel { display: flex; justify-content: center; gap: 5px; padding: 4px 5px 1px 0; }
.group { position: relative; height: 77px; }
.group::before { content: ""; position: absolute; inset: 5px 0 0; border: 1px solid #d0d0d0; border-radius: 3px; box-shadow: inset 1px 1px #fafafa; }
.group > * { position: relative; }
.group h3 { width: max-content; margin: 0 0 0 6px; padding: 0 1px; background: #f0f0f0; font: bold 11px/14px "DejaVu Sans Condensed", "Liberation Sans", sans-serif; color: #000080; }
.channel { display: flex; width: 303px; padding-left: 6px; }
.channels { display: flex; gap: 1px; width: 217px; padding: 1px 6px 0 0; background: #f0f0f0; }
.channels button { width: 26px; height: 18px; border: 1px solid #406080; border-radius: 2px; background: linear-gradient(#e0e0e0, #c0c0c0); color: #909090; font-size: 11px; line-height: 16px; }
.channels .green { width: 48px; background: #10ff10; border-color: #004000; color: #003000; font-weight: bold; }
.channels .blue { background: linear-gradient(#5080ff, #4060f0); color: #000030; font-weight: bold; }
.name-row { display: flex; align-items: center; gap: 3px; margin: 7px 0 0 2px; }
.name-row > svg { width: 20px; height: 20px; }
.name-box { display: flex; align-items: center; width: 177px; height: 21px; border: 1px solid #50e050; background: #fff; padding: 0 1px 0 3px; }
.name-box input { flex: 1; min-width: 0; outline: 0; font-family: "Liberation Sans", sans-serif; }
.name-box button { width: 17px; height: 17px; background: #f0f0f0; border: 1px solid; border-color: #fff #808080 #808080 #fff; line-height: 8px; font-weight: bold; }
.modes { display: flex; margin: 2px 0 0 4px; }
.modes button { width: 25px; height: 21px; display: grid; place-items: center; }
.modes button.on { background: #fafafa; border-left: 1px solid #b0b0b0; border-top: 1px solid #c8c8c8; }
.modes svg { width: 18px; height: 18px; }
.fx { font: italic bold 14px/18px "Liberation Serif", serif; }
.fx small { font-size: 10px; }
.dial { height: 64px; width: 100px; }
.dial.volt { width: 98px; margin: 12px 0 0 -14px; }
.dial-value { font: 13px "Liberation Sans", sans-serif; text-anchor: middle; }
.dial-label { font: 9px "Liberation Sans", sans-serif; text-anchor: middle; fill: #202020; }
.freq { width: 106px; }
.freq .dial { margin: -2px 0 0 10px; overflow: visible; }
.sync { width: 124px; }
.sync h3 { color: #707070; }
.sync-row { display: flex; align-items: center; justify-content: space-between; height: 28px; padding: 0 7px 0 9px; }
.sync-row button { width: 24px; height: 24px; display: grid; place-items: center; }
.sync-row button.on { background: #fafafa; }
.sync-row svg:not(.arrow) { width: 20px; height: 18px; }
.sync-box { width: 47px; height: 21px; border: 1px solid #909090; background: #f0f0f0; }
.control { width: 175px; }
.control h3 { color: #90b0d0; }
.control-grid { display: grid; grid-template-columns: 34px 46px 46px 31px; grid-template-rows: 27px 28px; gap: 2px 3px; margin: 3px 0 0 4px; }
.control-grid button, .timers button { display: flex; align-items: center; justify-content: center; border: 1px solid #204868; border-radius: 2px; background: linear-gradient(#fafafa, #e6e6e6); }
.control-grid svg { width: 20px; height: 20px; }
.control-grid svg.wide { width: 30px; }
.control-grid svg.wider { width: 34px; }
.control-grid svg.tall { width: 24px; height: 24px; }
.control-grid .flat { border-color: #d8d8d8; background: #f0f0f0; }
.control-grid .red { border-color: #d02030; }
.control-grid .start { grid-column: span 2; gap: 15px; justify-content: flex-start; padding-left: 4px; font-weight: bold; }
.control-grid .value { border-color: #70b8d8; background: #eef6fa; color: #007800; font-weight: bold; }
.auto-mini { font: bold 7px "Liberation Sans", sans-serif; text-anchor: middle; }
.timers { width: 67px; }
.timers button { width: 49px; height: 27px; margin: 3px 0 0 8px; gap: 6px; border-color: #808080; }
.timers button + button { margin-top: 2px; }
.clock { width: 24px; height: 24px; }

.status { display: flex; gap: 3px; padding-top: 2px; background: #fff; }
.status span { height: 17px; background: #f0f0f0; border-top: 1px solid #a0a0a0; border-left: 1px solid #a0a0a0; padding-left: 3px; }
.s-left { width: 188px; }
.s-mid { flex: 1; }
.s-right { width: 47px; }
</style>
